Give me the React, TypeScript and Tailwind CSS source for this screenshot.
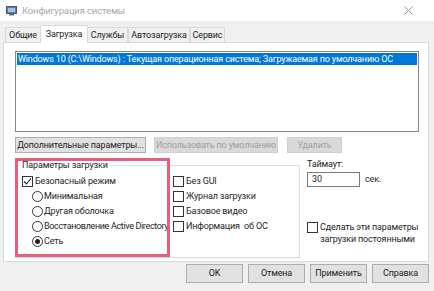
import { ReactNode } from 'react'

function CheckBox({ checked = false }: { checked?: boolean }) {
  return (
    <span className="w-[11px] h-[11px] border border-[#333] bg-white flex items-center justify-center shrink-0">
      {checked && (
        <svg width="9" height="9" viewBox="0 0 9 9">
          <path d="M1 4.5 L3.5 7 L8 1.5" fill="none" stroke="#222" strokeWidth="1.1" />
        </svg>
      )}
    </span>
  )
}

function Radio({ checked = false }: { checked?: boolean }) {
  return (
    <span className="w-[11px] h-[11px] rounded-full border border-[#333] bg-white flex items-center justify-center shrink-0">
      {checked && <span className="w-[5px] h-[5px] rounded-full bg-[#222]" />}
    </span>
  )
}

function Row({ children, className = '' }: { children: ReactNode; className?: string }) {
  return <div className={`h-[15px] flex items-center gap-[2px] whitespace-nowrap ${className}`}>{children}</div>
}

const tabs = [
  { label: 'Общие', w: 'w-[36px]' },
  { label: 'Загрузка', w: 'w-[48px]', active: true },
  { label: 'Службы', w: 'w-[41px]' },
  { label: 'Автозагрузка', w: 'w-[62px]' },
  { label: 'Сервис', w: 'w-[35px]' },
]

export default function App() {
  return (
    <div className="w-[434px] h-[291px] bg-[#f0f0f0] text-[9px] tracking-[-0.15px] leading-none text-[#1e1e1e] overflow-hidden font-['Roboto',sans-serif]">
      {/* Title bar */}
      <div className="h-[21px] bg-white flex items-center">
        <svg className="ml-[6px]" width="11" height="10" viewBox="0 0 11 10">
          <rect x="0.5" y="0.5" width="10" height="7" fill="#5a7fa8" stroke="#4a5566" />
          <rect x="2" y="2" width="7" height="4" fill="#9cc3e8" />
          <rect x="3" y="8" width="5" height="1.5" fill="#6b7280" />
        </svg>
        <span className="ml-[5px] text-[9.5px] text-[#a8a8a8]">Конфигурация системы</span>
        <svg className="ml-auto mr-[21px]" width="9" height="9" viewBox="0 0 9 9">
          <path d="M0.5 0.5 L8.5 8.5 M8.5 0.5 L0.5 8.5" stroke="#9a9a9a" strokeWidth="1" />
        </svg>
      </div>

      {/* Tabs */}
      <div className="h-[21px] flex items-end pl-[5px]">
        {tabs.map((t) =>
          t.active ? (
            <div
              key={t.label}
              className={`${t.w} h-[18px] -mb-px relative z-10 bg-white border border-b-0 border-[#d9d9d9] flex items-center justify-center -mx-px whitespace-nowrap`}
            >
              {t.label}
            </div>
          ) : (
            <div
              key={t.label}
              className={`${t.w} h-[15px] bg-[#f0f0f0] border border-b-0 border-[#d9d9d9] flex items-center justify-center whitespace-nowrap`}
            >
              {t.label}
            </div>
          )
        )}
      </div>

      {/* Panel */}
      <div className="ml-[3px] w-[426px] h-[220px] border border-[#d9d9d9] bg-white flex flex-col">
        <div className="ml-[11px] mt-[8px] w-[404px] h-[81px] border border-[#828790] p-[1px]">
          <div className="h-[12px] bg-[#0078d7] text-white pl-[1px] flex items-center whitespace-nowrap">
            Windows 10 (C:\Windows) : Текущая операционная система; Загружаемая по умолчанию ОС
          </div>
        </div>

        <div className="ml-[11px] mt-[5px] flex h-[16px] whitespace-nowrap">
          <div className="w-[131px] border border-[#adadad] bg-[#e1e1e1] flex items-center justify-center">
            Дополнительные параметры...
          </div>
          <div className="ml-[8px] w-[124px] border border-[#cfcfcf] bg-[#d9d9d9] text-[#a0a0a0] flex items-center justify-center">
            Использовать по умолчанию
          </div>
          <div className="ml-[9px] w-[55px] border border-[#cfcfcf] bg-[#d9d9d9] text-[#a0a0a0] flex items-center justify-center">
            Удалить
          </div>
        </div>

        <div className="relative ml-[11px] mt-[5px] flex">
          {/* Group box */}
          <div className="mt-[7px] w-[285px] h-[93px] border border-[#dcdcdc] relative flex pt-[8px]">
            <span className="absolute -top-[7px] left-[3px] bg-white px-[3px] leading-[12px] whitespace-nowrap">
              Параметры загрузки
            </span>
            <div className="w-[157px] pl-[6px]">
              <Row>
                <CheckBox checked />
                Безопасный режим
              </Row>
              <Row className="pl-[10px] !gap-[1px]">
                <Radio />
                Минимальная
              </Row>
              <Row className="pl-[10px] !gap-[1px]">
                <Radio />
                Другая оболочка
              </Row>
              <Row className="pl-[10px] !gap-[1px] tracking-[-0.35px]">
                <Radio />
                Восстановление Active Directory
              </Row>
              <Row className="pl-[10px] !gap-[1px]">
                <Radio checked />
                Сеть
              </Row>
            </div>
            <div>
              <Row>
                <CheckBox />
                Без GUI
              </Row>
              <Row>
                <CheckBox />
                Журнал загрузки
              </Row>
              <Row>
                <CheckBox />
                Базовое видео
              </Row>
              <Row>
                <CheckBox />
                Информация &nbsp;об ОС
              </Row>
            </div>
          </div>

          {/* Right column */}
          <div className="ml-[7px] flex flex-col">
            <div className="h-[12px] flex items-center">Таймаут:</div>
            <div className="mt-[2px] flex items-center">
              <div className="w-[53px] h-[15px] border border-[#7a7a7a] pl-[4px] flex items-center">30</div>
              <span className="ml-[5px]">сек.</span>
            </div>
            <div className="mt-[34px] flex items-start">
              <span className="mt-[1px]">
                <CheckBox />
              </span>
              <span className="ml-[2px] leading-[12px] whitespace-nowrap">
                Сделать эти параметры
                <br />
                загрузки постоянными
              </span>
            </div>
          </div>

          {/* Highlight annotation */}
          <div className="absolute left-0 top-0 w-[155px] h-[99px] border-[3px] border-[#e5607a] pointer-events-none" />
        </div>
      </div>

      {/* Dialog buttons */}
      <div className="mt-[2px] flex justify-end gap-[5px] pr-[5px]">
        {['OK', 'Отмена', 'Применить', 'Справка'].map((b) => (
          <div key={b} className="w-[57px] h-[19px] border border-[#adadad] bg-[#e1e1e1] flex items-center justify-center">
            {b}
          </div>
        ))}
      </div>
    </div>
  )
}
